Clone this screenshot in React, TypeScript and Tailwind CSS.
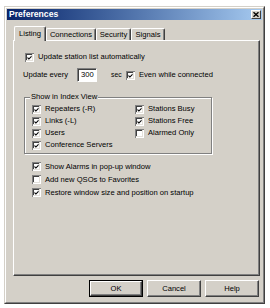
import React from "react";

function Box({ checked }: { checked: boolean }) {
  return (
    <svg width="9" height="9" viewBox="0 0 9 9" className="block shrink-0" shapeRendering="crispEdges">
      <rect x="0" y="0" width="9" height="9" fill="#ffffff" />
      <rect x="0" y="0" width="9" height="1" fill="#808080" />
      <rect x="0" y="0" width="1" height="9" fill="#808080" />
      <rect x="1" y="1" width="7" height="1" fill="#404040" />
      <rect x="1" y="1" width="1" height="7" fill="#404040" />
      <rect x="1" y="7" width="7" height="1" fill="#e4e1db" />
      <rect x="7" y="1" width="1" height="7" fill="#e4e1db" />
      {checked && (
        <path d="M2.5 3.8 L3.9 5.2 L6.6 2.5 L6.6 4.1 L3.9 6.8 L2.5 5.4 Z" fill="#000" shapeRendering="geometricPrecision" />
      )}
    </svg>
  );
}

function Check({ label, checked, className }: { label: string; checked: boolean; className?: string }) {
  return (
    <div className={"flex items-center gap-[4px] " + (className ?? "")}>
      <Box checked={checked} />
      <span className="whitespace-nowrap">{label}</span>
    </div>
  );
}

function Btn({ label, def }: { label: string; def?: boolean }) {
  const inner = (
    <div className="h-full w-full flex items-center justify-center border border-t-white border-l-white border-r-[#404040] border-b-[#404040] shadow-[inset_-1px_-1px_0_#808080]">
      {label}
    </div>
  );
  if (def) {
    return <div className="w-[54px] h-[17px] border border-black">{inner}</div>;
  }
  return <div className="w-[54px] h-[17px]">{inner}</div>;
}

export default function App() {
  return (
    <div className="w-[270px] h-[308px] bg-white pt-[6px] pl-[4px] font-['Liberation_Sans',Arial,sans-serif] text-black text-[7.6px] leading-none">
      <div className="w-[261px] h-[298px] border border-t-[#d4d0c8] border-l-[#d4d0c8] border-r-[#404040] border-b-[#404040]">
        <div className="h-full border border-t-white border-l-white border-r-[#808080] border-b-[#808080] bg-[#d4d0c8] p-[1px] flex flex-col">
          {/* Title bar */}
          <div className="h-[11px] flex items-center justify-between bg-linear-to-r from-[#0a246a] to-[#a6caf0] pl-[2px] pr-[1px]">
            <span className="text-white font-bold text-[8.6px]">Preferences</span>
            <div className="w-[10px] h-[9px] bg-[#d4d0c8] flex items-center justify-center border border-t-white border-l-white border-r-[#404040] border-b-[#404040]">
              <svg width="6" height="5" viewBox="0 0 6 5">
                <path d="M0.5 0.3 L5.5 4.7 M5.5 0.3 L0.5 4.7" stroke="#000" strokeWidth="1.4" />
              </svg>
            </div>
          </div>

          <div className="ml-[6px] mt-[6px] w-[247px] flex flex-col">
            {/* Tabs */}
            <div className="h-[14px] flex items-start pl-[1px]">
              <div className="relative z-10 w-[32px] h-[15px] bg-[#d4d0c8] flex items-center justify-center pb-[1px] border-t border-l border-r border-t-white border-l-white border-r-[#404040] rounded-t-[2px] shadow-[inset_-1px_0_0_#808080]">
                Listing
              </div>
              <div className="mt-[2px] w-[50px] h-[12px] flex items-center justify-center border-t border-l border-r border-t-white border-l-white border-r-[#404040] rounded-t-[2px] shadow-[inset_-1px_0_0_#808080]">
                Connections
              </div>
              <div className="mt-[2px] w-[35px] h-[12px] flex items-center justify-center border-t border-l border-r border-t-white border-l-white border-r-[#404040] rounded-t-[2px] shadow-[inset_-1px_0_0_#808080]">
                Security
              </div>
              <div className="mt-[2px] w-[34px] h-[12px] flex items-center justify-center border-t border-l border-r border-t-white border-l-white border-r-[#404040] rounded-t-[2px] shadow-[inset_-1px_0_0_#808080]">
                Signals
              </div>
            </div>

            {/* Panel */}
            <div className="h-[236px] flex flex-col border border-t-white border-l-white border-r-[#404040] border-b-[#404040] shadow-[inset_-1px_-1px_0_#808080]">
              <Check className="mt-[11px] h-[10px] pl-[11px]" label="Update station list automatically" checked />

              <div className="mt-[6px] h-[14px] pl-[9px] flex items-center">
                <span className="w-[54px] whitespace-nowrap">Update every</span>
                <div className="w-[20px] h-[14px] bg-white flex items-center pl-[3px] border border-t-[#808080] border-l-[#808080] border-r-white border-b-white shadow-[inset_1px_1px_0_#404040]">
                  300
                </div>
                <span className="ml-[14px] w-[15px] text-[6.8px]">sec</span>
                <Check label="Even while connected" checked />
              </div>

              <div className="relative mt-[15px] ml-[10px] w-[188px] h-[57px] border border-[#808080] shadow-[inset_1px_1px_0_#ffffff,1px_1px_0_#ffffff]">
                <span className="absolute -top-[5px] left-[5px] px-[1px] bg-[#d4d0c8] whitespace-nowrap">Show in Index View</span>
                <div className="pt-[5px] pl-[7px] grid grid-cols-[103px_auto] auto-rows-[12px]">
                  <Check className="h-[12px]" label="Repeaters (-R)" checked />
                  <Check className="h-[12px]" label="Stations Busy" checked />
                  <Check className="h-[12px]" label="Links (-L)" checked />
                  <Check className="h-[12px]" label="Stations Free" checked />
                  <Check className="h-[12px]" label="Users" checked />
                  <Check className="h-[12px]" label="Alarmed Only" checked={false} />
                  <Check className="h-[12px]" label="Conference Servers" checked />
                </div>
              </div>

              <div className="mt-[6px] pl-[18px] flex flex-col">
                <Check className="h-[13px]" label="Show Alarms in pop-up window" checked />
                <Check className="h-[13px]" label="Add new QSOs to Favorites" checked={false} />
                <Check className="h-[13px]" label="Restore window size and position on startup" checked />
              </div>
            </div>

            {/* Buttons */}
            <div className="mt-[4px] flex justify-end gap-[4px] pr-[1px]">
              <Btn label="OK" def />
              <Btn label="Cancel" />
              <Btn label="Help" />
            </div>
          </div>
        </div>
      </div>
    </div>
  );
}
